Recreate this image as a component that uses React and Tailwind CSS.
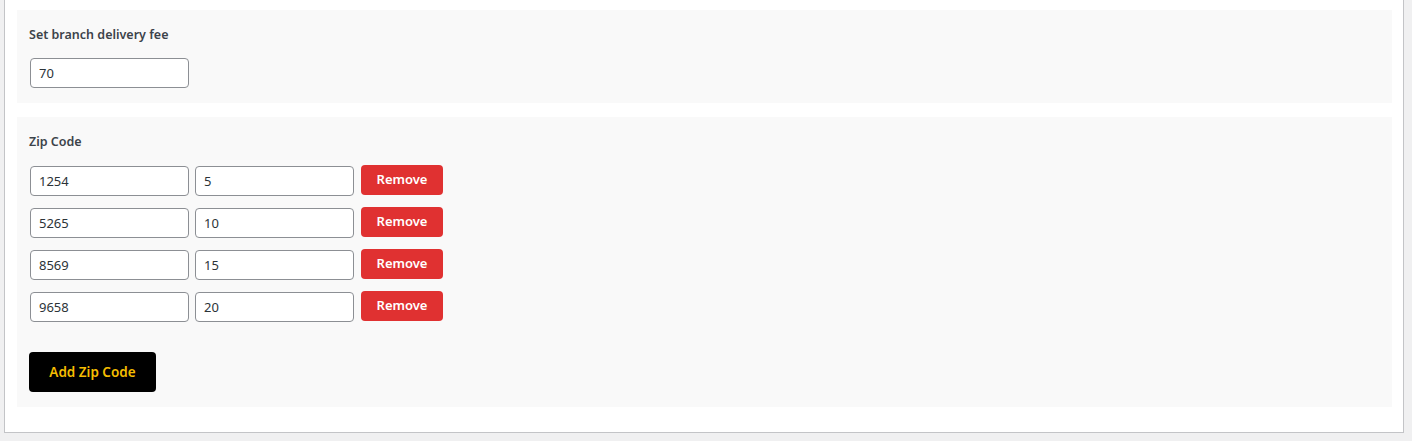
const rows = [
  { zip: '1254', fee: '5' },
  { zip: '5265', fee: '10' },
  { zip: '8569', fee: '15' },
  { zip: '9658', fee: '20' },
];

const inputCls =
  'h-[30px] w-[159px] rounded-[4px] border border-[#8c8f94] bg-white px-2 text-[13px] text-[#2c3338] outline-none';

const App = () => {
  return (
    <div className="min-h-[441px] bg-[#f0f0f1] font-['Noto_Sans',sans-serif]">
      <div className="ml-1 w-[1400px] h-[433px] border border-t-0 border-[#c3c4c7] bg-white pl-3 pr-[11px] pt-[10px]">
        <section className="h-[93px] bg-[#f9f9f9] px-3 pt-[16px]">
          <h3 className="text-[12.5px] font-semibold leading-[18px] text-[#3c434a]">Set branch delivery fee</h3>
          <input className={`${inputCls} mt-[14px] ml-px`} defaultValue="70" />
        </section>

        <section className="mt-[14px] h-[290px] bg-[#f9f9f9] px-3 pt-[16px]">
          <h3 className="text-[12.5px] font-semibold leading-[18px] text-[#3c434a]">Zip Code</h3>
          <div className="mt-[15px] flex flex-col gap-3">
            {rows.map((row) => (
              <div key={row.zip} className="flex items-center gap-[6px] pl-px">
                <input className={inputCls} defaultValue={row.zip} />
                <input className={inputCls} defaultValue={row.fee} />
                <button
                  type="button"
                  className="ml-px h-[30px] w-[82px] -translate-y-px rounded-[4px] bg-[#e03131] text-[13px] font-semibold text-white"
                >
                  Remove
                </button>
              </div>
            ))}
          </div>
          <button
            type="button"
            className="mt-[30px] h-[40px] w-[127px] rounded-[4px] bg-black text-[13.5px] font-semibold text-[#f5bd00]"
          >
            Add Zip Code
          </button>
        </section>
      </div>
    </div>
  );
};

export default App;
